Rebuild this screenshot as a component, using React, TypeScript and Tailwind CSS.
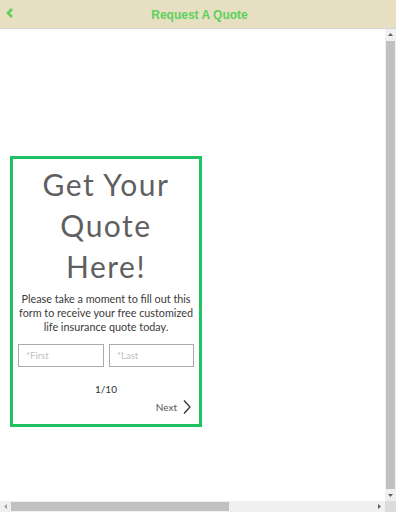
export default function App() {
  return (
    <div className="w-[396px] h-[512px] flex flex-col bg-white overflow-hidden" style={{ fontFamily: '"Liberation Sans", Arial, sans-serif' }}>
      {/* header */}
      <header className="h-[29px] shrink-0 relative flex items-center justify-center bg-[#e6dfc1] border-b border-[#d6d6d6]">
        <button className="absolute left-[5px] top-[7px] text-[#5cd15c]">
          <svg width="10" height="12" viewBox="0 0 10 12">
            <path d="M7 2 L3 6 L7 10" fill="none" stroke="currentColor" strokeWidth="2.6" />
          </svg>
        </button>
        <h1 className="text-[12px] font-bold text-[#5cd15c] ml-[3px] mt-[1px]">Request A Quote</h1>
      </header>

      <div className="flex-1 flex min-h-0">
        <main className="flex-1 pl-[10px] pt-[127px]">
          <div className="w-[192px] h-[271px] border-[3px] border-[#1fc163] flex flex-col items-center px-[5px]" style={{ fontFamily: 'Lato, sans-serif' }}>
            <h2 className="mt-[5px] text-[30px] leading-[41px] text-[#5f5f5f] text-center tracking-[1.5px]">
              Get Your<br />Quote<br />Here!
            </h2>
            <p className="mt-[5px] text-[10.8px] leading-[14px] text-[#3a3a3a] text-center">
              Please take a moment to fill out this form to receive your free customized life insurance quote today.
            </p>
            <div className="mt-[10px] w-full flex gap-[5px]">
              <input placeholder="*First" className="w-[86px] h-[23px] border border-[#aaaaaa] px-[7px] text-[9.5px] placeholder:text-[#c0c0c0] outline-none" />
              <input placeholder="*Last" className="w-[85px] h-[23px] border border-[#aaaaaa] px-[7px] text-[9.5px] placeholder:text-[#c0c0c0] outline-none" />
            </div>
            <div className="mt-[15px] text-[10px] text-[#333]">1/10</div>
            <div className="w-full flex justify-end items-center gap-[5px] pr-[2px] mt-[2px]">
              <span className="text-[10px] text-[#555]">Next</span>
              <svg width="10" height="16" viewBox="0 0 10 16">
                <path d="M2 1.5 L8 8 L2 14.5" fill="none" stroke="#333" strokeWidth="1.3" />
              </svg>
            </div>
          </div>
        </main>

        {/* vertical scrollbar */}
        <div className="w-[11px] bg-[#f0f0f0] flex flex-col items-center">
          <div className="h-[11px] flex items-center justify-center">
            <svg width="5" height="3" viewBox="0 0 5 3"><path d="M0 3 L2.5 0 L5 3Z" fill="#606060" /></svg>
          </div>
          <div className="w-[9px] flex-1 bg-[#c1c1c1] my-[1px]" />
          <div className="h-[11px] flex items-center justify-center">
            <svg width="5" height="3" viewBox="0 0 5 3"><path d="M0 0 L2.5 3 L5 0Z" fill="#606060" /></svg>
          </div>
        </div>
      </div>

      {/* horizontal scrollbar */}
      <div className="h-[11px] shrink-0 flex">
        <div className="flex-1 bg-[#f0f0f0] flex items-center">
          <div className="w-[11px] flex items-center justify-center">
            <svg width="3" height="5" viewBox="0 0 3 5"><path d="M3 0 L0 2.5 L3 5Z" fill="#a0a0a0" /></svg>
          </div>
          <div className="w-[218px] h-[9px] bg-[#c1c1c1]" />
          <div className="flex-1" />
          <div className="w-[11px] flex items-center justify-center">
            <svg width="3" height="5" viewBox="0 0 3 5"><path d="M0 0 L3 2.5 L0 5Z" fill="#606060" /></svg>
          </div>
        </div>
        <div className="w-[11px] bg-[#dcdcdc]" />
      </div>
    </div>
  );
}
